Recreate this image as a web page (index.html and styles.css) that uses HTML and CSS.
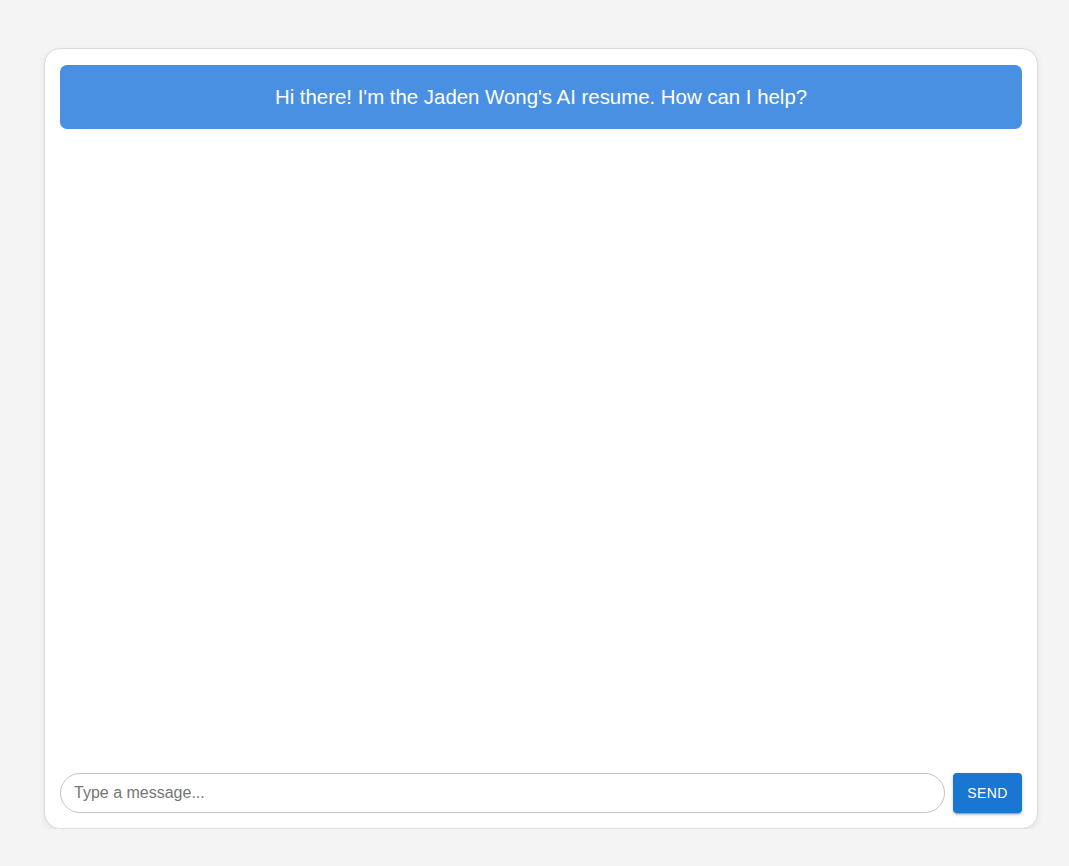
FILE: index.html
```html
<!DOCTYPE html>
<html>
<head>
<meta charset="utf-8">
<link rel="stylesheet" href="styles.css">
</head>
<body>
<div class="chat">
  <div class="header">Hi there! I'm the Jaden Wong's AI resume. How can I help?</div>
  <div class="messages"></div>
  <div class="composer">
    <input class="input" type="text" placeholder="Type a message...">
    <button class="send">Send</button>
  </div>
</div>
</body>
</html>
```
FILE: styles.css
```css
html, body {
  margin: 0;
  padding: 0;
  background: #f4f4f4;
  font-family: "Liberation Sans", Arial, sans-serif;
}
body {
  padding: 48px 0 0 44px;
}
.chat {
  box-sizing: border-box;
  width: 994px;
  height: 781px;
  background: #fff;
  border: 1px solid #dcdcdc;
  border-radius: 16px;
  box-shadow: 0 2px 6px rgba(0,0,0,0.08);
  padding: 16px 15px 15px 15px;
  display: flex;
  flex-direction: column;
}
.header {
  height: 64px;
  background: #4a90e2;
  color: #fff;
  border-radius: 7px;
  display: flex;
  align-items: center;
  justify-content: center;
  font-size: 20.4px;
}
.messages {
  flex: 1;
}
.composer {
  display: flex;
  gap: 8px;
  height: 40px;
}
.input {
  flex: 1;
  box-sizing: border-box;
  height: 40px;
  border: 1px solid #c4c4c4;
  border-radius: 20px;
  padding: 0 13px;
  font-family: "Liberation Sans", Arial, sans-serif;
  font-size: 16px;
  color: #333;
  outline: none;
}
.input::placeholder {
  color: #757575;
}
.send {
  width: 69px;
  height: 40px;
  padding: 0;
  border: none;
  border-radius: 4px;
  background: #1976d2;
  color: #fff;
  font-family: "Liberation Sans", Arial, sans-serif;
  font-size: 14px;
  font-weight: 500;
  text-transform: uppercase;
  letter-spacing: 0.4px;
  box-shadow: 0 3px 1px -2px rgba(0,0,0,0.2), 0 2px 2px 0 rgba(0,0,0,0.14), 0 1px 5px 0 rgba(0,0,0,0.12);
  cursor: pointer;
}
```
